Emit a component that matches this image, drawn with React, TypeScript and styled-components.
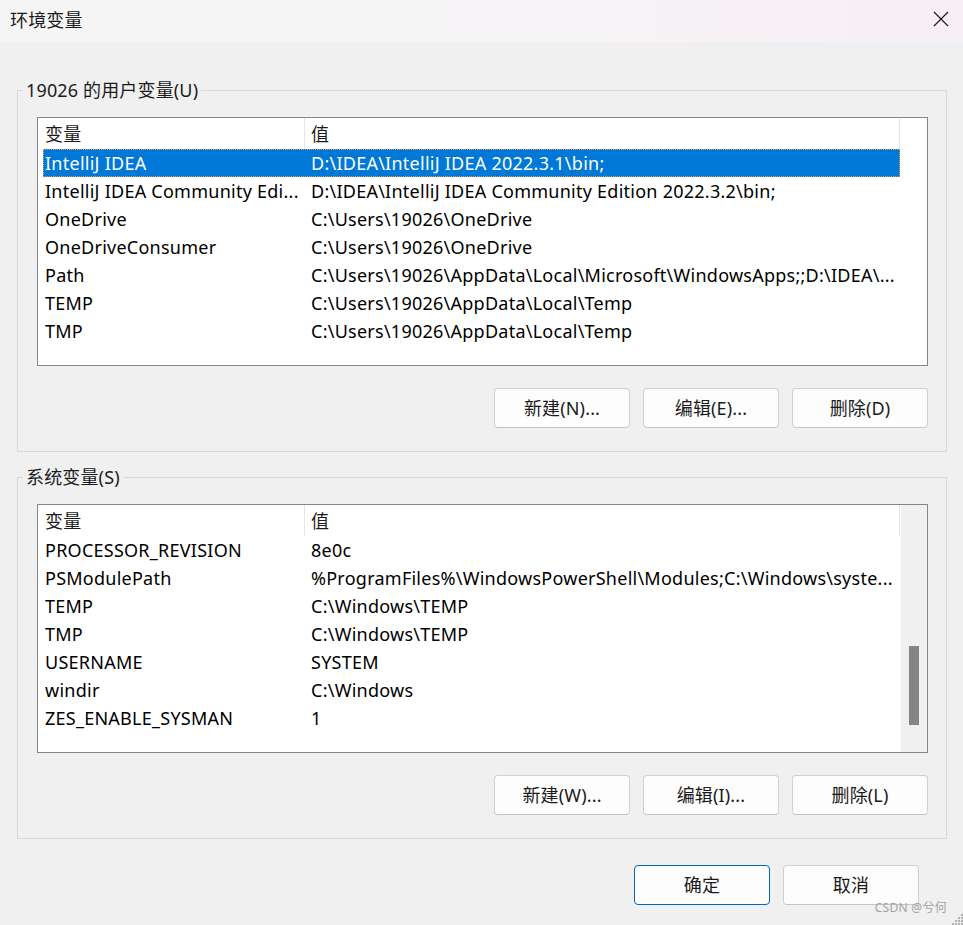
import React from 'react';
import styled, { createGlobalStyle } from 'styled-components';

const GlobalStyle = createGlobalStyle`
  html, body {
    margin: 0;
    padding: 0;
    background: #f0f0f0;
  }
`;

const Window = styled.div`
  position: relative;
  width: 963px;
  height: 925px;
  overflow: hidden;
  display: flex;
  flex-direction: column;
  background: #f0f0f0;
  color: #000;
  font-family: 'Noto Sans', 'Noto Sans CJK SC', sans-serif;
  font-size: 18px;
  letter-spacing: 0.15px;
`;

const TitleBar = styled.div`
  flex: none;
  height: 42px;
  display: flex;
  align-items: center;
  justify-content: space-between;
  padding: 0 14px 0 10px;
  background: linear-gradient(90deg, #f5f5f5 0%, #f6f4f6 55%, #f8eef6 100%);
`;

const Title = styled.span`
  font-size: 18px;
  line-height: 1;
  color: #1b1b1b;
  margin-top: -3px;
`;

const CloseButton = styled.button`
  width: 16px;
  height: 16px;
  padding: 0;
  border: 0;
  background: none;
  display: flex;
  align-items: center;
  justify-content: center;
  margin-top: -4px;
`;

const Body = styled.div`
  flex: 1;
  display: flex;
  flex-direction: column;
  padding: 36px 16px 0 17px;
`;

const GroupBox = styled.fieldset<{ $gap?: number }>`
  margin: ${(p) => p.$gap ?? 0}px 0 0 0;
  padding: 0 18px 23px 19px;
  border: 1px solid #dadada;
  min-width: 0;
`;

const Legend = styled.legend`
  margin-left: -14px;
  padding: 0 3px;
  line-height: 24px;
  font-size: 18px;
  color: #1b1b1b;
`;

const ListView = styled.div`
  margin-top: 15px;
  height: 249px;
  box-sizing: border-box;
  border: 1px solid #868686;
  background: #fff;
  display: flex;
  overflow: hidden;
`;

const Table = styled.div`
  width: 862px;
  flex: none;
  display: flex;
  flex-direction: column;
`;

const HeaderRow = styled.div`
  height: 31px;
  display: flex;
`;

const HeaderCell = styled.div<{ $w: number; $pad: number }>`
  width: ${(p) => p.$w}px;
  flex: none;
  padding-left: ${(p) => p.$pad}px;
  box-sizing: border-box;
  border-right: 1px solid #e5e5e5;
  display: flex;
  align-items: center;
  padding-bottom: 2px;
  color: #1b1b1b;
`;

const Row = styled.div<{ $selected?: boolean }>`
  height: 28px;
  margin-left: 5px;
  display: flex;
  align-items: center;
  letter-spacing: 0.25px;
  background: ${(p) => (p.$selected ? '#0078d7' : 'transparent')};
  color: ${(p) => (p.$selected ? '#fff' : '#000')};
  outline: ${(p) => (p.$selected ? '1px dotted #d9a05a' : 'none')};
  outline-offset: -1px;
`;

const Cell = styled.div<{ $w?: number; $pad: number }>`
  ${(p) => (p.$w ? `width: ${p.$w}px; flex: none;` : 'flex: 1;')}
  box-sizing: border-box;
  padding-left: ${(p) => p.$pad}px;
  white-space: nowrap;
  overflow: hidden;
  padding-bottom: 1px;
`;

const ScrollTrack = styled.div`
  flex: 1;
  margin-left: 1px;
  background: #f0f0f0;
  display: flex;
  justify-content: center;
  padding: 141px 0 0 0;
`;

const ScrollThumb = styled.div`
  width: 10px;
  height: 79px;
  background: #858585;
`;

const ButtonRow = styled.div<{ $top: number; $right: number }>`
  display: flex;
  justify-content: flex-end;
  gap: 13px;
  margin-top: ${(p) => p.$top}px;
  padding-right: ${(p) => p.$right}px;
`;

const Button = styled.button<{ $primary?: boolean }>`
  width: 136px;
  height: 40px;
  box-sizing: border-box;
  border-radius: 4px;
  border: 1px solid ${(p) => (p.$primary ? '#0067c0' : '#d0d0d0')};
  border-bottom-color: ${(p) => (p.$primary ? '#0067c0' : '#c4c4c4')};
  background: #fdfdfd;
  font-family: inherit;
  font-size: 18px;
  letter-spacing: inherit;
  color: #1b1b1b;
  padding: 0 0 2px 0;
`;

const Watermark = styled.span`
  position: absolute;
  right: 16px;
  bottom: 9px;
  font-size: 12px;
  color: #a3a3a3;
  letter-spacing: 0.3px;
`;

const Grip = styled.svg`
  position: absolute;
  right: 0;
  bottom: 0;
`;

type Entry = [string, string];

const userVars: Entry[] = [
  ['IntelliJ IDEA', 'D:\\IDEA\\IntelliJ IDEA 2022.3.1\\bin;'],
  ['IntelliJ IDEA Community Edi...', 'D:\\IDEA\\IntelliJ IDEA Community Edition 2022.3.2\\bin;'],
  ['OneDrive', 'C:\\Users\\19026\\OneDrive'],
  ['OneDriveConsumer', 'C:\\Users\\19026\\OneDrive'],
  ['Path', 'C:\\Users\\19026\\AppData\\Local\\Microsoft\\WindowsApps;;D:\\IDEA\\...'],
  ['TEMP', 'C:\\Users\\19026\\AppData\\Local\\Temp'],
  ['TMP', 'C:\\Users\\19026\\AppData\\Local\\Temp'],
];

const systemVars: Entry[] = [
  ['PROCESSOR_REVISION', '8e0c'],
  ['PSModulePath', '%ProgramFiles%\\WindowsPowerShell\\Modules;C:\\Windows\\syste...'],
  ['TEMP', 'C:\\Windows\\TEMP'],
  ['TMP', 'C:\\Windows\\TEMP'],
  ['USERNAME', 'SYSTEM'],
  ['windir', 'C:\\Windows'],
  ['ZES_ENABLE_SYSMAN', '1'],
];

interface VariableListProps {
  rows: Entry[];
  selected?: number;
  scrollbar?: boolean;
}

const VariableList = ({ rows, selected, scrollbar }: VariableListProps) => (
  <ListView>
    <Table>
      <HeaderRow>
        <HeaderCell $w={267} $pad={7}>变量</HeaderCell>
        <HeaderCell $w={595} $pad={6}>值</HeaderCell>
      </HeaderRow>
      {rows.map(([name, value], i) => (
        <Row key={name + i} $selected={i === selected}>
          <Cell $w={262} $pad={2}>{name}</Cell>
          <Cell $pad={6}>{value}</Cell>
        </Row>
      ))}
    </Table>
    {scrollbar && (
      <ScrollTrack>
        <ScrollThumb />
      </ScrollTrack>
    )}
  </ListView>
);

const App = () => (
  <Window>
    <GlobalStyle />
    <TitleBar>
      <Title>环境变量</Title>
      <CloseButton aria-label="关闭">
        <svg width="16" height="16" viewBox="0 0 16 16">
          <path d="M1 1 L15 15 M15 1 L1 15" stroke="#1b1b1b" strokeWidth="1.2" fill="none" />
        </svg>
      </CloseButton>
    </TitleBar>
    <Body>
      <GroupBox>
        <Legend>19026 的用户变量(U)</Legend>
        <VariableList rows={userVars} selected={0} />
        <ButtonRow $top={22} $right={0}>
          <Button>新建(N)...</Button>
          <Button>编辑(E)...</Button>
          <Button>删除(D)</Button>
        </ButtonRow>
      </GroupBox>
      <GroupBox $gap={13}>
        <Legend>系统变量(S)</Legend>
        <VariableList rows={systemVars} scrollbar />
        <ButtonRow $top={22} $right={0}>
          <Button>新建(W)...</Button>
          <Button>编辑(I)...</Button>
          <Button>删除(L)</Button>
        </ButtonRow>
      </GroupBox>
      <ButtonRow $top={26} $right={28}>
        <Button $primary>确定</Button>
        <Button>取消</Button>
      </ButtonRow>
    </Body>
    <Watermark>CSDN @兮何</Watermark>
    <Grip width="12" height="12" viewBox="0 0 12 12">
      {[
        [9, 1],
        [6, 4],
        [9, 4],
        [3, 7],
        [6, 7],
        [9, 7],
        [0, 10],
        [3, 10],
        [6, 10],
        [9, 10],
      ].map(([x, y]) => (
        <rect key={`${x}-${y}`} x={x + 1} y={y} width="2" height="2" fill="#b0b0b0" />
      ))}
    </Grip>
  </Window>
);

export default App;
